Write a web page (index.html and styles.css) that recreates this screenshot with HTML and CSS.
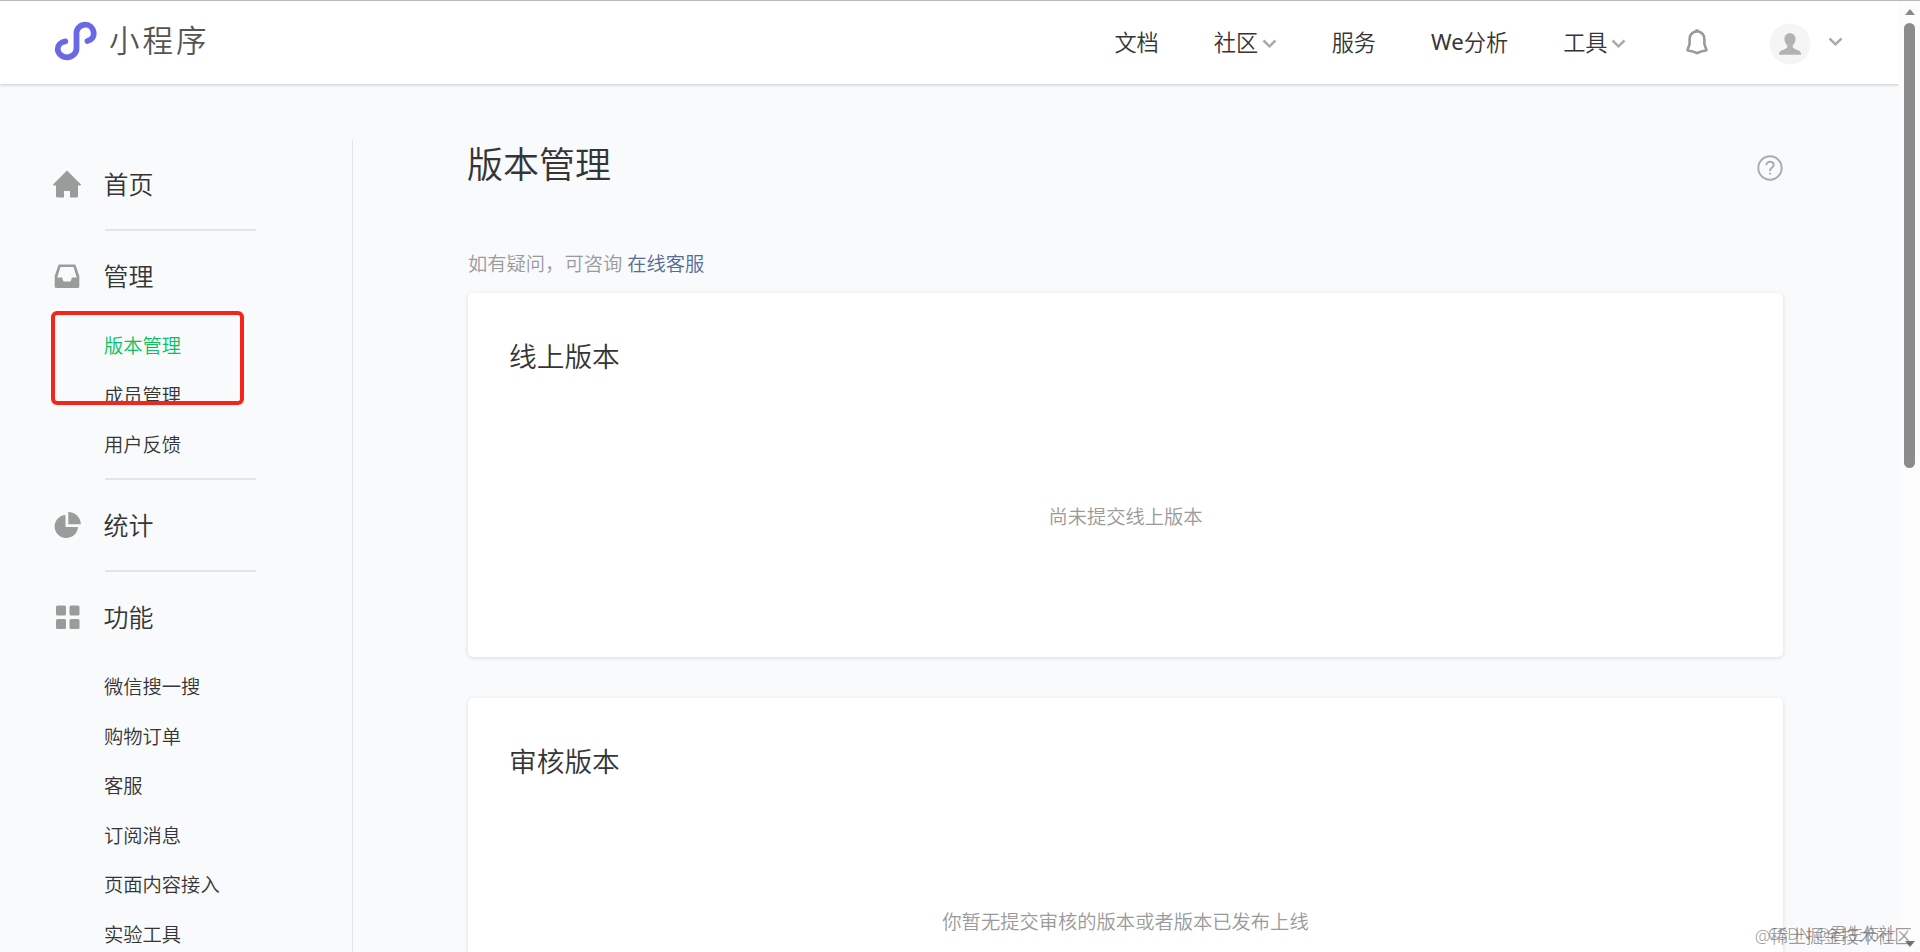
FILE: index.html
```
<!DOCTYPE html>
<html lang="zh-CN">
<head>
    <meta charset="UTF-8">
    <meta name="viewport" content="width=device-width, initial-scale=1.0">
    <link rel="stylesheet" href="styles.css">
    <title>小程序</title>
</head>
<body>
    <div class="window">
        <div class="page">
            <header class="header">
                <div class="logo">
                    <svg class="logo-icon" width="44" height="40" viewBox="0 0 44 40" fill="none" stroke="#6b68e8" stroke-width="5.8" stroke-linecap="round">
                        <path d="M33.5 20 C38 19 40.2 15.500 39.700 11.500 C39 7 35.500 3.700 31.500 3.700 C26.500 3.700 22.500 7.200 22.500 12 V27.500 C22.500 32.300 18 36.300 13.300 36.300 C8 36.300 3.700 32.500 3.700 28 C3.700 24.200 6.700 21 11.300 20.300"/>
                    </svg>
                    <span class="logo-text">小程序</span>
                </div>
                <nav class="nav">
                    <a class="nav-item">文档</a>
                    <a class="nav-item">社区<svg class="arrow" width="15" height="10" viewBox="0 0 15 10"><path d="M1.500 1.500 L7.500 7.300 L13.500 1.500"/></svg></a>
                    <a class="nav-item">服务</a>
                    <a class="nav-item"><span class="latin">We</span>分析</a>
                    <a class="nav-item">工具<svg class="arrow" width="15" height="10" viewBox="0 0 15 10"><path d="M1.500 1.500 L7.500 7.300 L13.500 1.500"/></svg></a>
                    <svg class="bell" width="22" height="26" viewBox="0 0 22 26" fill="none" stroke="#999" stroke-width="2.600" stroke-linejoin="round">
                        <path d="M11 2.200 C6 2.800 3.600 6 3.600 10.500 V15 L1.500 21.200 C4.500 21.800 8 22.500 11 24.200 C14 22.500 17.500 21.800 20.500 21.200 L18.400 15 V10.500 C18.400 6 16 2.800 11 2.200 Z"/>
                        <path d="M9.300 1.600 H12.700"/>
                    </svg>
                    <div class="user">
                        <svg width="42" height="42" viewBox="0 0 42 42">
                            <circle cx="21" cy="21" r="20.500" fill="#f5f5f6"/>
                            <path fill="#b2b2b2" d="M21 10.200 C24.500 10.200 26.600 12.700 26.600 16 C26.600 19 25 21.200 23.700 22.500 C23.500 24.200 24 25.200 25.500 25.800 L29.500 27.400 C31.500 28.200 32 29.500 32 31.800 H10 C10 29.500 10.500 28.200 12.500 27.400 L16.500 25.800 C18 25.200 18.500 24.200 18.300 22.500 C17 21.200 15.400 19 15.400 16 C15.400 12.700 17.500 10.200 21 10.200 Z"/>
                        </svg>
                        <svg class="arrow" width="15" height="10" viewBox="0 0 15 10"><path d="M1.500 1.500 L7.500 7.300 L13.500 1.500"/></svg>
                    </div>
                </nav>
            </header>

            <div class="content">
                <aside class="sidebar">
                    <div class="menu">
                        <div class="menu-title">
                            <svg width="28" height="28" viewBox="0 0 28 28" fill="#9a9b9b">
                                <path d="M14 0.500 L28 14.500 Q28 15.500 27 15.500 H25 V26 Q25 27.500 23.500 27.500 H17 V21 H11 V27.500 H4.500 Q3 27.500 3 26 V15.500 H1 Q0 15.500 0 14.500 Z"/>
                            </svg>
                            <span>首页</span>
                        </div>
                    </div>
                    <div class="menu">
                        <div class="menu-title">
                            <svg width="28" height="28" viewBox="0 0 28 28">
                                <path fill="#9a9b9b" fill-rule="evenodd" d="M6.500 2.500 H21.500 Q22.500 2.500 22.800 3.500 L26.300 14 V24.500 Q26.300 26 24.800 26 H3.200 Q1.700 26 1.700 24.500 V14 L5.200 3.500 Q5.500 2.500 6.500 2.500 Z M7.500 4.900 L4.300 15.500 H9 L10.500 19.500 H17.500 L19 15.500 H23.700 L20.500 4.900 Z"/>
                            </svg>
                            <span>管理</span>
                        </div>
                        <ul class="submenu">
                            <li class="active">版本管理</li>
                            <li>成员管理</li>
                            <li>用户反馈</li>
                        </ul>
                    </div>
                    <div class="menu">
                        <div class="menu-title">
                            <svg width="28" height="28" viewBox="0 0 28 28" fill="#9a9b9b">
                                <path d="M12.500 4 V16 H25 A11.700 11.500 0 1 1 12.500 4 Z"/>
                                <path d="M15.300 1 A12.500 12.500 0 0 1 27.800 13.300 H15.300 Z"/>
                            </svg>
                            <span>统计</span>
                        </div>
                    </div>
                    <div class="menu">
                        <div class="menu-title">
                            <svg width="28" height="28" viewBox="0 0 28 28" fill="#9a9b9b">
                                <rect x="3" y="2.500" width="10" height="10" rx="1.500"/>
                                <rect x="16.500" y="2.500" width="10" height="10" rx="1.500"/>
                                <rect x="3" y="16" width="10" height="10" rx="1.500"/>
                                <rect x="16.500" y="16" width="10" height="10" rx="1.500"/>
                            </svg>
                            <span>功能</span>
                        </div>
                        <ul class="submenu">
                            <li>微信搜一搜</li>
                            <li>购物订单</li>
                            <li>客服</li>
                            <li>订阅消息</li>
                            <li>页面内容接入</li>
                            <li>实验工具</li>
                        </ul>
                    </div>
                    <div class="mark"></div>
                </aside>

                <main class="main">
                    <div class="main-top">
                        <h1>版本管理</h1>
                        <svg width="26" height="26" viewBox="0 0 26 26" fill="none" stroke="#aaabad" stroke-width="1.900">
                            <circle cx="13" cy="13" r="11.700"/>
                            <path d="M9.300 10.300 C9.300 7.900 10.900 6.700 13 6.700 C15.200 6.700 16.700 8 16.700 9.900 C16.700 12.500 13 12.700 13 16"/>
                            <path d="M13 17.800 V19.600"/>
                        </svg>
                    </div>
                    <p class="tip">如有疑问，可咨询 <a>在线客服</a></p>
                    <section class="card">
                        <h2>线上版本</h2>
                        <p>尚未提交线上版本</p>
                    </section>
                    <section class="card">
                        <h2>审核版本</h2>
                        <p>你暂无提交审核的版本或者版本已发布上线</p>
                    </section>
                </main>
            </div>
        </div>

        <div class="scrollbar">
            <svg width="10" height="6" viewBox="0 0 10 6" fill="#888"><path d="M5 0 L10 6 H0 Z"/></svg>
            <div class="thumb"></div>
            <svg class="down" width="10" height="6" viewBox="0 0 10 6" fill="#777"><path d="M0 0 H10 L5 6 Z"/></svg>
        </div>
        <span class="watermark juejin">@稀土掘金技术社区</span>
        <span class="watermark csdn">CSDN @君生伤社</span>
    </div>
</body>
</html>
```
FILE: styles.css
```
*{
    box-sizing: border-box;
    margin: 0;
    padding: 0;
}
body{
    font-family: "Noto Sans", "Noto Sans CJK SC", sans-serif;
    font-weight: 350;
    color: #353535;
    background-color: #f8fafc;
    overflow: hidden;
}
.window{
    position: relative;
    display: flex;
    height: 952px;
    border-top: 1px solid #b8b8b8;
    overflow: hidden;
}
.page{
    flex: 1;
}
.header{
    display: flex;
    justify-content: space-between;
    align-items: center;
    height: 83px;
    padding: 0 56px 0 54px;
    background-color: white;
    box-shadow: 0 1px 3px rgba(0,0,0,.2);
}
.logo{
    display: flex;
    align-items: center;
    gap: 11px;
    padding-bottom: 3px;
}
.logo-text{
    padding-bottom: 4px;
    font-size: 30.5px;
    letter-spacing: 3px;
    color: #555;
}
.nav{
    display: flex;
    align-items: center;
    gap: 55px;
    font-size: 22.2px;
}
.nav-item{
    display: flex;
    align-items: center;
    padding-bottom: 3px;
}
.latin{
    font-weight: 400;
}
.arrow{
    fill: none;
    stroke: #aaa;
    stroke-width: 2.5;
}
.nav-item .arrow{
    margin-top: 5px;
    margin-left: 3.5px;
}
.bell{
    margin-left: 5px;
    margin-right: 6px;
    margin-bottom: 2px;
}
.user{
    display: flex;
    align-items: center;
    gap: 17px;
    padding-top: 2px;
}
.user .arrow{
    margin-bottom: 3px;
}

/* sidebar */
.content{
    display: flex;
    padding-top: 56px;
}
.sidebar{
    position: relative;
    width: 353px;
    height: 812px;
    padding-left: 53px;
    border-right: 1px solid #e4e5e7;
}
.menu::after{
    content: "";
    display: block;
    width: 151px;
    height: 2px;
    margin-left: 52px;
    background-color: #e3e4e5;
}
.menu:first-child{
    margin-top: -1px;
}
.menu-title{
    display: flex;
    align-items: center;
    gap: 22.5px;
    height: 90px;
    font-size: 25px;
}
.menu-title span{
    padding-bottom: 2px;
}
.submenu{
    list-style: none;
    padding-left: 51px;
    padding-bottom: 8.5px;
    font-size: 19.3px;
}
.submenu li{
    height: 49.5px;
    line-height: 49px;
}
.submenu .active{
    color: #07c160;
}
.mark{
    position: absolute;
    left: 50.5px;
    top: 171px;
    width: 193px;
    height: 94px;
    border: 4px solid #f5251a;
    border-radius: 6px;
}

/* main */
.main{
    width: 1430px;
    padding-left: 115px;
}
.main-top{
    display: flex;
    justify-content: space-between;
    align-items: center;
    height: 50px;
}
.main-top svg{
    margin-top: 6px;
}
h1{
    padding-bottom: 5px;
    margin-left: -1px;
    font-size: 36px;
    font-weight: 350;
}
.tip{
    height: 30px;
    margin-top: 59px;
    margin-bottom: 14px;
    font-size: 19.3px;
    line-height: 30px;
    color: #9a9a9a;
}
.tip a{
    color: #576b95;
}
.card{
    height: 364px;
    margin-bottom: 41px;
    padding: 43px 41px;
    background-color: white;
    border-radius: 5px;
    box-shadow: 0 1px 4px rgba(0,0,0,.13);
}
.card h2{
    height: 42px;
    font-size: 27.7px;
    font-weight: 350;
    line-height: 41px;
}
.card p{
    margin-top: 124px;
    font-size: 19.3px;
    line-height: 30px;
    text-align: center;
    color: #9a9a9a;
}

.scrollbar{
    display: flex;
    flex-direction: column;
    align-items: center;
    width: 21px;
    padding: 8px 0 5px;
    background-color: #fcfcfc;
}
.thumb{
    width: 11px;
    height: 445px;
    margin-top: 8px;
    border-radius: 6px;
    background-color: #8b8b8b;
}
.down{
    margin-top: auto;
}
.watermark{
    position: absolute;
    bottom: 4px;
    line-height: 24px;
    white-space: nowrap;
    color: rgba(90,90,90,.6);
}
.juejin{
    right: 8px;
    font-size: 17.7px;
}
.csdn{
    left: 1768px;
    bottom: 6px;
    font-size: 16.5px;
}
```
